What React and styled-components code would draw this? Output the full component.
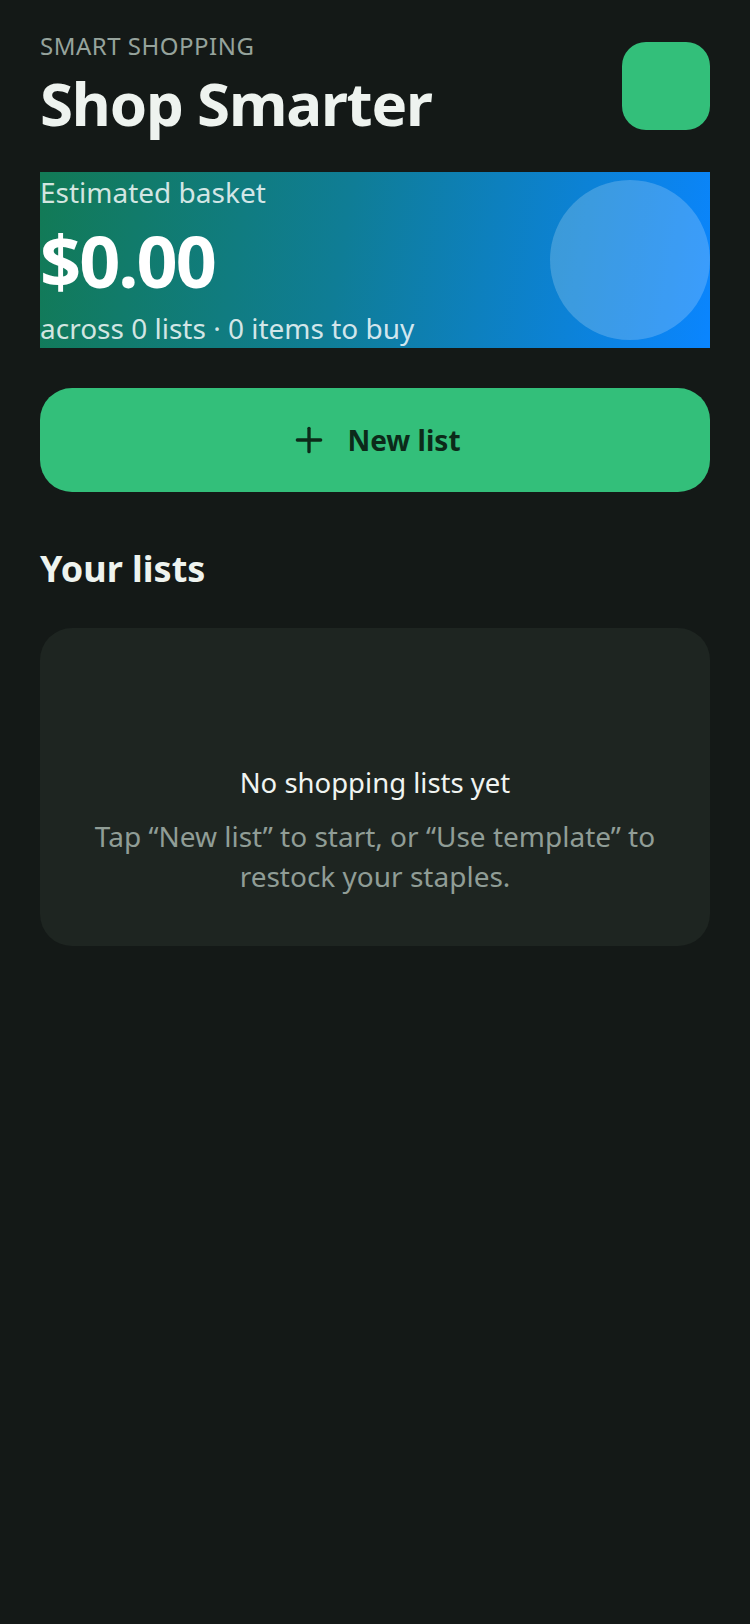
import React from 'react';
import styled, { createGlobalStyle } from 'styled-components';

const GlobalStyle = createGlobalStyle`
  html, body {
    margin: 0;
    padding: 0;
    background: #141917;
  }
  body {
    font-family: 'Noto Sans', 'Open Sans', sans-serif;
    color: #eef3ef;
  }
  * {
    box-sizing: border-box;
  }
`;

const Page = styled.div`
  min-height: 1624px;
  background: #141917;
  padding: 29px 40px 40px;
`;

const Header = styled.header`
  display: flex;
  align-items: flex-start;
  justify-content: space-between;
`;

const TitleBlock = styled.div`
  display: flex;
  flex-direction: column;
`;

const Eyebrow = styled.span`
  font-size: 24px;
  letter-spacing: 0.5px;
  color: #96a39c;
  text-transform: uppercase;
`;

const Title = styled.h1`
  margin: 0;
  font-size: 60px;
  font-weight: 700;
  letter-spacing: -1.2px;
  color: #eef3ef;
`;

const AvatarTile = styled.div`
  margin-top: 13px;
  width: 88px;
  height: 88px;
  border-radius: 24px;
  background: #33bf7a;
`;

const BasketCard = styled.section`
  margin-top: 28px;
  height: 176px;
  display: flex;
  align-items: center;
  justify-content: space-between;
  background: linear-gradient(100deg, #127a55 0%, #0f7d96 45%, #0a85ff 100%);
  overflow: hidden;
`;

const BasketText = styled.div`
  display: flex;
  flex-direction: column;
`;

const BasketLabel = styled.span`
  font-size: 28px;
  color: rgba(255, 255, 255, 0.82);
`;

const BasketTotal = styled.span`
  font-size: 72px;
  font-weight: 700;
  letter-spacing: -2px;
  color: #ffffff;
`;

const BasketMeta = styled.span`
  font-size: 28px;
  color: rgba(255, 255, 255, 0.82);
`;

const Bubble = styled.div`
  width: 160px;
  height: 160px;
  border-radius: 50%;
  background: rgba(255, 255, 255, 0.2);
  flex-shrink: 0;
`;

const PrimaryButton = styled.button`
  margin-top: 40px;
  width: 100%;
  height: 104px;
  border: none;
  border-radius: 32px;
  background: #33bf7a;
  color: #0c2a19;
  font-family: inherit;
  font-size: 28px;
  font-weight: 700;
  display: flex;
  align-items: center;
  justify-content: center;
  gap: 18px;
  cursor: pointer;
`;

const SectionTitle = styled.h2`
  margin: 52px 0 35px;
  font-size: 36px;
  font-weight: 700;
  color: #eef3ef;
`;

const EmptyCard = styled.div`
  background: #1e2521;
  border-radius: 32px;
  padding: 48px 40px 50px;
  display: flex;
  flex-direction: column;
  align-items: center;
  text-align: center;
`;

const EmptyArt = styled.div`
  height: 72px;
  margin-bottom: 16px;
`;

const EmptyTitle = styled.div`
  font-size: 27.5px;
  color: #f0f4f1;
`;

const EmptyText = styled.p`
  margin: 15px 0 0;
  font-size: 28px;
  line-height: 40px;
  color: #909d96;
`;

const PlusIcon = () => (
  <svg width="40" height="40" viewBox="0 0 24 24" fill="none" stroke="currentColor" strokeWidth="2" strokeLinecap="round">
    <path d="M5 12h14" />
    <path d="M12 5v14" />
  </svg>
);

export default function App() {
  return (
    <>
      <GlobalStyle />
      <Page>
        <Header>
          <TitleBlock>
            <Eyebrow>Smart shopping</Eyebrow>
            <Title>Shop Smarter</Title>
          </TitleBlock>
          <AvatarTile />
        </Header>

        <BasketCard>
          <BasketText>
            <BasketLabel>Estimated basket</BasketLabel>
            <BasketTotal>$0.00</BasketTotal>
            <BasketMeta>across 0 lists · 0 items to buy</BasketMeta>
          </BasketText>
          <Bubble />
        </BasketCard>

        <PrimaryButton>
          <PlusIcon />
          New list
        </PrimaryButton>

        <SectionTitle>Your lists</SectionTitle>

        <EmptyCard>
          <EmptyArt />
          <EmptyTitle>No shopping lists yet</EmptyTitle>
          <EmptyText>Tap “New list” to start, or “Use template” to restock your staples.</EmptyText>
        </EmptyCard>
      </Page>
    </>
  );
}
